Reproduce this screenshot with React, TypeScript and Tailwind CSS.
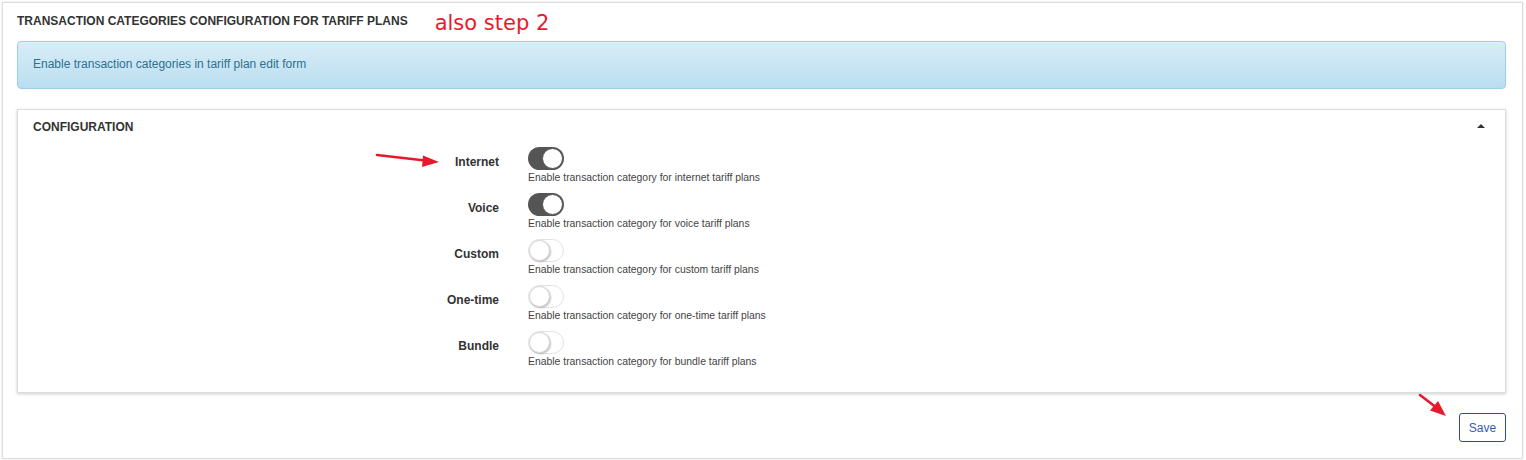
import React from "react";

const rows = [
  { label: "Internet", on: true, help: "Enable transaction category for internet tariff plans" },
  { label: "Voice", on: true, help: "Enable transaction category for voice tariff plans" },
  { label: "Custom", on: false, help: "Enable transaction category for custom tariff plans" },
  { label: "One-time", on: false, help: "Enable transaction category for one-time tariff plans" },
  { label: "Bundle", on: false, help: "Enable transaction category for bundle tariff plans" },
];

function Toggle({ on }: { on: boolean }) {
  return on ? (
    <div className="relative w-[36px] h-[23px] rounded-full bg-[#555555]">
      <div className="absolute right-[1px] top-[1px] w-[21px] h-[21px] rounded-full bg-white border border-[#555555]" />
    </div>
  ) : (
    <div className="relative w-[36px] h-[23px] rounded-full bg-white border border-[#e2e2e2]">
      <div className="absolute left-0 top-0 w-[21px] h-[21px] rounded-full bg-white border border-[#d6d6d6] shadow-[1px_1px_2px_rgba(0,0,0,0.25)]" />
    </div>
  );
}

export default function App() {
  return (
    <div className="relative w-[1526px] h-[460px] bg-white pt-[2px] pl-[2px] pr-[3px] font-['Liberation_Sans',Arial,sans-serif] text-[#333333]">
      <div className="h-[457px] border border-[#dddddd] shadow-[0_0_2px_rgba(0,0,0,0.12)] px-[14px] pt-[10px]">
        <div className="flex items-center h-[16px]">
          <h1 className="text-[12px] font-bold leading-[16px] uppercase">
            Transaction categories configuration for tariff plans
          </h1>
          <span className="ml-[27px] mt-[3px] text-[21px] leading-[16px] text-[#e8192c] font-['DejaVu_Sans',sans-serif]">
            also step 2
          </span>
        </div>
        <div className="mt-[12px] h-[48px] mr-[2px] rounded-[4px] border border-[#9acfea] bg-gradient-to-b from-[#d9edf7] to-[#b9def0] flex items-center pl-[15px] pb-[3px] text-[12px] text-[#31708f] shadow-[inset_0_1px_0_rgba(255,255,255,0.25)]">
          Enable transaction categories in tariff plan edit form
        </div>
        <div className="mt-[20px] mr-[2px] border border-[#dddddd] shadow-[0_1px_3px_rgba(0,0,0,0.2)] bg-white">
          <div className="h-[37px] pt-[10px] pl-[15px] pr-[20px] flex justify-between">
            <span className="text-[12px] font-bold leading-[14px] uppercase">Configuration</span>
            <span className="mt-[4px] w-0 h-0 border-l-[4px] border-r-[4px] border-b-[4px] border-l-transparent border-r-transparent border-b-[#333333]" />
          </div>
          <div className="pb-[15px]">
            {rows.map((r) => (
              <div key={r.label} className="flex h-[46px]">
                <div className="w-[481px] pt-[8px] text-right text-[12px] font-bold leading-[14px]">{r.label}</div>
                <div className="ml-[29px]">
                  <Toggle on={r.on} />
                  <div className="mt-[1px] text-[10.4px] leading-[14px] text-[#444444]">{r.help}</div>
                </div>
              </div>
            ))}
          </div>
        </div>
        <div className="flex justify-end mr-[2px] mt-[20px]">
          <button className="w-[47px] h-[29px] rounded-[3px] border border-[#2d4e9e] text-[12px] text-[#3a5cb8] bg-white">
            Save
          </button>
        </div>
      </div>
      <svg className="absolute left-0 top-0 pointer-events-none" width="1526" height="460">
        <line x1="377" y1="155" x2="425" y2="160.5" stroke="#e8192c" strokeWidth="2.6" strokeLinecap="round" />
        <polygon points="439,162 423,155.5 422,167" fill="#e8192c" />
        <line x1="1420" y1="395" x2="1437" y2="408" stroke="#e8192c" strokeWidth="2.6" strokeLinecap="round" />
        <polygon points="1446,416 1430,410.5 1438,401" fill="#e8192c" />
      </svg>
    </div>
  );
}
